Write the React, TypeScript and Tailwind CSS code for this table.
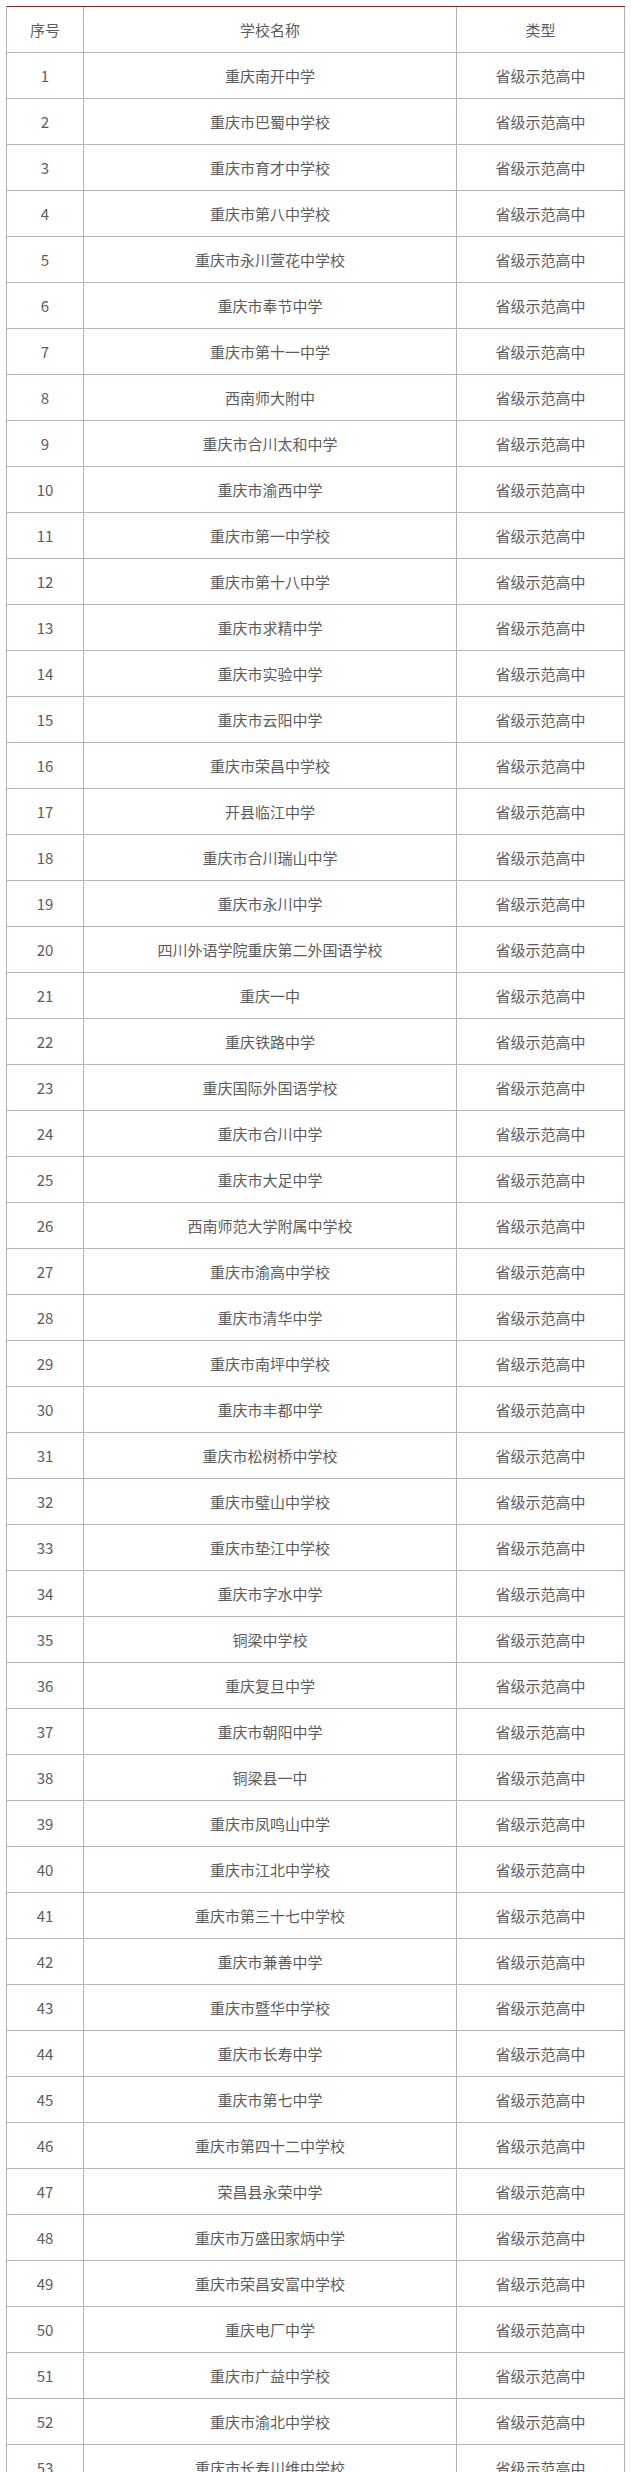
import React from "react";

const schools = [
  "重庆南开中学",
  "重庆市巴蜀中学校",
  "重庆市育才中学校",
  "重庆市第八中学校",
  "重庆市永川萱花中学校",
  "重庆市奉节中学",
  "重庆市第十一中学",
  "西南师大附中",
  "重庆市合川太和中学",
  "重庆市渝西中学",
  "重庆市第一中学校",
  "重庆市第十八中学",
  "重庆市求精中学",
  "重庆市实验中学",
  "重庆市云阳中学",
  "重庆市荣昌中学校",
  "开县临江中学",
  "重庆市合川瑞山中学",
  "重庆市永川中学",
  "四川外语学院重庆第二外国语学校",
  "重庆一中",
  "重庆铁路中学",
  "重庆国际外国语学校",
  "重庆市合川中学",
  "重庆市大足中学",
  "西南师范大学附属中学校",
  "重庆市渝高中学校",
  "重庆市清华中学",
  "重庆市南坪中学校",
  "重庆市丰都中学",
  "重庆市松树桥中学校",
  "重庆市璧山中学校",
  "重庆市垫江中学校",
  "重庆市字水中学",
  "铜梁中学校",
  "重庆复旦中学",
  "重庆市朝阳中学",
  "铜梁县一中",
  "重庆市凤鸣山中学",
  "重庆市江北中学校",
  "重庆市第三十七中学校",
  "重庆市兼善中学",
  "重庆市暨华中学校",
  "重庆市长寿中学",
  "重庆市第七中学",
  "重庆市第四十二中学校",
  "荣昌县永荣中学",
  "重庆市万盛田家炳中学",
  "重庆市荣昌安富中学校",
  "重庆电厂中学",
  "重庆市广益中学校",
  "重庆市渝北中学校",
  "重庆市长寿川维中学校",
];

function Row({ a, b, c }: { a: string; b: string; c: string }) {
  return (
    <div className="flex h-[46px] border-b border-[#b3b3bb]">
      <div className="flex w-[77px] shrink-0 items-center justify-center border-r border-[#b3b3bb]">{a}</div>
      <div className="flex w-[373px] shrink-0 items-center justify-center border-r border-[#b3b3bb]">{b}</div>
      <div className="flex w-[168px] shrink-0 items-center justify-center border-r border-[#b3b3bb]">{c}</div>
    </div>
  );
}

export default function App() {
  return (
    <div
      className="h-[2472px] overflow-hidden bg-white pl-[6px] pt-[6px] text-[15px] leading-none text-[#5c5c5c]"
      style={{ fontFamily: '"Noto Sans CJK SC", "Noto Sans", sans-serif' }}
    >
      <div className="w-[619px] border-l border-t border-l-[#b3b3bb] border-t-[#7a2b2b]">
        <Row a="序号" b="学校名称" c="类型" />
        {schools.map((s, i) => (
          <Row key={i} a={String(i + 1)} b={s} c="省级示范高中" />
        ))}
      </div>
    </div>
  );
}
